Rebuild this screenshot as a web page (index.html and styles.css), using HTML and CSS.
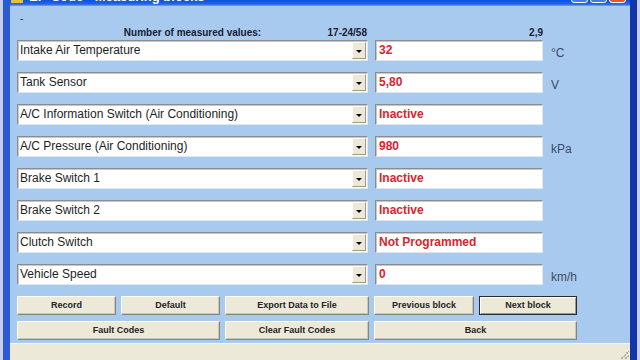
FILE: index.html
```html
<!DOCTYPE html>
<html lang="en">
<head>
  <meta charset="UTF-8">
  <title>Measuring blocks</title>
  <link rel="stylesheet" href="styles.css">
</head>
<body>
  <div class="desk">
    <div class="window">
      <div class="titlebar">
        <span class="app-icon"></span>
        <span class="title">EP-Code - Measuring blocks</span>
        <span class="tb-buttons">
          <span class="tb-btn"></span>
          <span class="tb-btn"></span>
          <span class="tb-btn close"></span>
        </span>
      </div>

      <div class="client">
        <div class="dash">-</div>
        <div class="head">
          <div class="head-left">
            <span></span>
            <span class="count-label">Number of measured values:</span>
            <span class="count">17-24/58</span>
          </div>
          <div class="rate">2,9</div>
        </div>

        <div class="rows">
          <div class="row">
            <div class="combo"><span class="combo-text">Intake Air Temperature</span><span class="drop"></span></div>
            <div class="value">32</div>
            <div class="unit">°C</div>
          </div>
          <div class="row">
            <div class="combo"><span class="combo-text">Tank Sensor</span><span class="drop"></span></div>
            <div class="value">5,80</div>
            <div class="unit">V</div>
          </div>
          <div class="row">
            <div class="combo"><span class="combo-text">A/C Information Switch (Air Conditioning)</span><span class="drop"></span></div>
            <div class="value">Inactive</div>
            <div class="unit"></div>
          </div>
          <div class="row">
            <div class="combo"><span class="combo-text">A/C Pressure (Air Conditioning)</span><span class="drop"></span></div>
            <div class="value">980</div>
            <div class="unit">kPa</div>
          </div>
          <div class="row">
            <div class="combo"><span class="combo-text">Brake Switch 1</span><span class="drop"></span></div>
            <div class="value">Inactive</div>
            <div class="unit"></div>
          </div>
          <div class="row">
            <div class="combo"><span class="combo-text">Brake Switch 2</span><span class="drop"></span></div>
            <div class="value">Inactive</div>
            <div class="unit"></div>
          </div>
          <div class="row">
            <div class="combo"><span class="combo-text">Clutch Switch</span><span class="drop"></span></div>
            <div class="value">Not Programmed</div>
            <div class="unit"></div>
          </div>
          <div class="row">
            <div class="combo"><span class="combo-text">Vehicle Speed</span><span class="drop"></span></div>
            <div class="value">0</div>
            <div class="unit">km/h</div>
          </div>
        </div>

        <div class="buttons">
          <div class="btn">Record</div>
          <div class="btn">Default</div>
          <div class="btn">Export Data to File</div>
          <div class="btn">Previous block</div>
          <div class="btn focused">Next block</div>
          <div class="btn wide">Fault Codes</div>
          <div class="btn">Clear Fault Codes</div>
          <div class="btn wide">Back</div>
        </div>
      </div>

      <div class="statusbar"><span class="grip"></span></div>
    </div>
  </div>
</body>
</html>
```

FILE: styles.css
```css
html, body {
  margin: 0;
  height: 100%;
}

body {
  background: #c9cbef;
  overflow: hidden;
  font-family: "Liberation Sans", Arial, sans-serif;
}

.desk {
  height: 360px;
  padding: 0 3px 0 3px;
}

.window {
  height: 100%;
  display: flex;
  flex-direction: column;
  border-left: 7px solid #2b5bd4;
  border-right: 7px solid #0f35a6;
  background: #a9caef;
}

/* only the bottom sliver of the caption is on screen */
.titlebar {
  height: 6px;
  flex: none;
  display: flex;
  align-items: flex-end;
  overflow: hidden;
  background: linear-gradient(#0a4fe0, #2766e8 70%, #7aa4ee);
  color: #fff;
}

.app-icon {
  width: 12px;
  height: 12px;
  margin-left: 1px;
  margin-bottom: 3px;
  background: #e8c040;
  flex: none;
}

.title {
  margin-left: 6px;
  margin-bottom: 3px;
  font-size: 13px;
  font-weight: bold;
  line-height: 12px;
  white-space: nowrap;
}

.tb-buttons {
  margin-left: auto;
  margin-right: 4px;
  display: flex;
  gap: 2px;
  margin-bottom: 3px;
}

.tb-btn {
  width: 15px;
  height: 14px;
  border: 1px solid #fff;
  border-radius: 3px;
  background: #3d7bf0;
}

.tb-btn.close {
  background: #e2572e;
}

.client {
  flex: 1;
  display: flex;
  flex-direction: column;
  padding: 9px 0 0 7px;
}

.dash {
  height: 10px;
  padding-left: 3px;
  font-size: 10px;
  line-height: 8px;
  color: #222;
}

.head,
.row {
  display: grid;
  grid-template-columns: 351px 168px auto;
  column-gap: 7px;
}

.head {
  height: 15px;
  font-size: 10px;
  font-weight: bold;
  line-height: 15px;
  color: #1a2030;
  margin-bottom: 0;
}

.head-left {
  display: grid;
  grid-template-columns: 1fr auto 1fr;
}

.count {
  justify-self: end;
  padding-right: 1px;
}

.rate {
  text-align: right;
}

.rows {
  display: flex;
  flex-direction: column;
  gap: 11px;
}

.row {
  height: 21px;
}

.combo,
.value {
  background: #fff;
  border: 1px solid;
  border-color: #8c8c8c #e6e6e6 #e6e6e6 #8c8c8c;
  box-shadow: inset 1px 1px #c8c8c8;
  box-sizing: border-box;
  height: 21px;
  font-size: 12px;
  line-height: 19px;
  white-space: nowrap;
  overflow: hidden;
}

.combo {
  display: flex;
  color: #1e1e1e;
}

.combo-text {
  flex: 1;
  padding-left: 2px;
}

.drop {
  width: 12px;
  margin: 1px 1px 1px 0;
  background: #ece9d8;
  border: 1px solid;
  border-color: #fff #9d9a8c #9d9a8c #fff;
  position: relative;
}

.drop:after {
  content: "";
  position: absolute;
  left: 3px;
  top: 7px;
  border-left: 3px solid transparent;
  border-right: 3px solid transparent;
  border-top: 3px solid #000;
}

.value {
  padding-left: 3px;
  color: #d6262e;
  font-weight: bold;
}

.unit {
  padding: 5px 0 0 1px;
  font-size: 12px;
  line-height: 16px;
  color: #3c4a66;
}

.buttons {
  margin-top: 11px;
  display: grid;
  grid-template-columns: 99px 99px 144px 100px 98px;
  grid-auto-rows: 19px;
  column-gap: 5px;
  row-gap: 6px;
}

.btn {
  background: #ece9d8;
  border: 1px solid;
  border-color: #fff #87857a #87857a #fff;
  box-shadow: inset -1px -1px #cbc7b6;
  font-size: 9px;
  font-weight: bold;
  line-height: 17px;
  text-align: center;
  color: #23241f;
  white-space: nowrap;
}

.btn.wide {
  grid-column: span 2;
}

.btn.focused {
  border-color: #2a2a2a;
  box-shadow: inset 1px 1px #fff, inset -1px -1px #9d9a8c;
}

.statusbar {
  height: 16px;
  flex: none;
  background: #ece9d8;
  border-top: 1px solid #f7f6ef;
  position: relative;
}

.grip {
  position: absolute;
  right: 1px;
  bottom: 1px;
  width: 10px;
  height: 10px;
  background: linear-gradient(135deg, transparent 55%, #b7b3a2 55%, #b7b3a2 65%, transparent 65%, transparent 75%, #b7b3a2 75%, #b7b3a2 85%, transparent 85%);
}
```
